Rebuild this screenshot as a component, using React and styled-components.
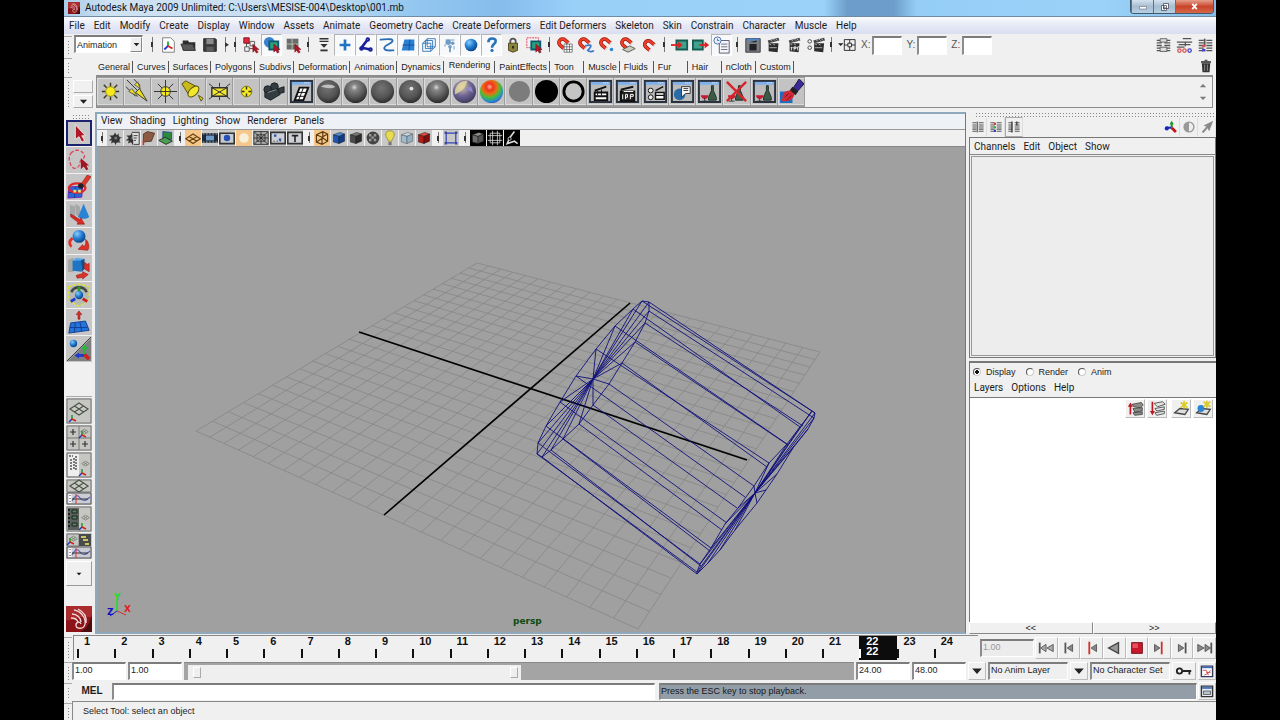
import React from 'react';
import styled, { createGlobalStyle, css } from 'styled-components';

const UI_FONT = 'Roboto, "Open Sans", sans-serif';
const SMALL_FONT = '"Liberation Sans", Arial, sans-serif';

const MENUS = [
	'File', 'Edit', 'Modify', 'Create', 'Display', 'Window', 'Assets', 'Animate',
	'Geometry Cache', 'Create Deformers', 'Edit Deformers', 'Skeleton', 'Skin',
	'Constrain', 'Character', 'Muscle', 'Help',
];

const SHELF_TABS = [
	'General', 'Curves', 'Surfaces', 'Polygons', 'Subdivs', 'Deformation',
	'Animation', 'Dynamics', 'Rendering', 'PaintEffects', 'Toon', 'Muscle',
	'Fluids', 'Fur', 'Hair', 'nCloth', 'Custom',
];

// '|' is a separator, '>' a collapsed group, a leading '+' a pressed button
const STATUS_ITEMS = [
	'newScene', 'openScene', 'saveScene', '>', '|',
	'selHierarchy', '+selObject', 'selComponent', '|', 'maskMenu',
	'+maskPoint', '+maskJoint', '+maskCurve', '+maskSurface', '+maskDeform',
	'+maskDynamic', '+maskRender', '+maskMisc', 'lock', 'highlight', '|',
	'magnetGrid', 'magnetCurve', 'magnetPoint', 'magnetPlane', 'magnetLive', '|',
	'inputs', 'outputs', '+history', '|',
	'renderView', 'clapper', 'clapperIpr', 'clapperSettings', '|', 'inputMode',
];

const SHELF_ITEMS = [
	'ambient', 'directional', 'pointLight', 'spot', 'areaLight', 'volume',
	'camera', 'hypershade', 'anisotropic', 'blinn', 'lambert', 'phong', 'phongE',
	'layered', 'ramp', 'surfaceShader', 'useBackground', 'shadingMap',
	'winRender', 'winIpr', 'winSettings', 'winSphere', 'winFlask', 'noFlask',
	'winFlask', 'brush',
];

const VIEW_ITEMS = [
	'|', 'camSelect', 'camAttr', 'bookmark', 'imagePlane', '|',
	'+gridToggle', 'filmGate', 'resGate', '+gateMask', 'fieldChart', 'safeAction',
	'safeTitle', '|', '+wireBox', 'blueBox', 'darkBox', 'checker', 'bulb',
	'softBox', 'redBox', '|', 'isolate', '|', 'xray', 'xrayFrame', 'xrayJoint',
];

const TOOLS = [
	'toolSelect', 'toolLasso', 'toolPaint', 'toolMove', 'toolRotate',
	'toolScale', 'toolUniversal', 'toolSoft', 'toolManip',
];

const LAYOUTS = [
	'laySingle', 'layFour', 'layOutliner', 'layGraph', 'layHyper', 'layMixed',
];

const PLAYBACK = [
	'toStart', 'prevFrame', 'prevKey', 'playBack', 'stop', 'nextKey',
	'nextFrame', 'toEnd',
];

const clap = (
	<g>
		<path d="M4 8h11l-1 10-10-1z" fill="#2c2c2c" />
		<path d="M3 5l12-3 1 3L4 8z" fill="#444" />
		<path d="M6 4l2 2M9 3l2 2M12 3l2 2M5 9l2 1M9 9l2 1M5 13h8" stroke="#bbb" />
	</g>
);

const magnet = (
	<g fill="none" transform="rotate(-50 8 8)">
		<path d="M4 13V7a4 4 0 0 1 8 0v6" stroke="#9c1208" strokeWidth="4" />
		<path d="M4 13V7a4 4 0 0 1 8 0v6" stroke="#f0402c" strokeWidth="2.500" />
		<path d="M2 13h4M10 13h4" stroke="#e4e4e4" strokeWidth="2" />
	</g>
);

const cursor = <path d="M12 9v9l2-2 2 3 2-1-2-3h3z" fill="#b01828" stroke="#6b0d16" strokeWidth=".5" />;

const windowFrame = (
	<g>
		<path d="M2 2h22v22H2z" fill="#bcbcbc" stroke="#2c3340" strokeWidth="2" />
		<path d="M3 3h20v3H3z" fill="#7fb0ea" />
		<path d="M16 4h6" stroke="#fff" strokeDasharray="1 1" />
	</g>
);

const rays = (
	<path
		d="M13 4v4M13 18v4M4 13h4M18 13h4M6 6l3 3M17 17l3 3M20 6l-3 3M9 17l-3 3"
		stroke="#3a3a20"
		strokeWidth="1.500"
	/>
);

const flask = (
	<g>
		<path d="M15 7h2v5l3 7v3h-8v-3l3-7z" fill="#3c5c48" stroke="#1c3024" />
		<path d="M4 17h8c0 5-8 5-8 0z" fill="#c51a30" />
		<path d="M8 20v3M5 23h6" stroke="#333" />
	</g>
);

const plane = (
	<path
		d="M4 11l9-6 9 6-9 6zM8.500 8l9 6M17.500 8l-9 6"
		fill="#c9ccc4"
		stroke="#4c5448"
		strokeWidth="1.200"
	/>
);

const axes = (x, y) => (
	<g strokeWidth="1.500" fill="none">
		<path d={`M${x} ${y}v-4`} stroke="#1d9a2e" />
		<path d={`M${x} ${y}l-3 3`} stroke="#1c35c8" />
		<path d={`M${x} ${y}l4 2`} stroke="#d32020" />
	</g>
);

const ball = (id) => <circle cx="13" cy="13" r="12" fill={`url(#${id})`} />;

const wave = (
	<g fill="none">
		<path d="M1 14h24v11H1z" fill="#c9ccd2" stroke="#555" />
		<path d="M4 15v9" stroke="#fff" strokeWidth="3" />
		<path d="M4 16v8" stroke="#333" strokeDasharray="1 2" />
		<path d="M6 22c4-7 6-6 8-3s5 4 10-1" stroke="#5862b8" strokeWidth="1.200" />
		<path d="M6 20h16" stroke="#333" />
		<path d="M10 15v10" stroke="#d33" />
	</g>
);

const box = (top, left, right) => (
	<g stroke="#1a1a1a" strokeWidth=".6">
		<path d="M3 6l8-3 6 2-7 3z" fill={top} />
		<path d="M3 6l7 2v9l-7-2z" fill={left} />
		<path d="M10 8l7-3v9l-7 3z" fill={right} />
	</g>
);

const reel = (
	<g fill="#333">
		<circle cx="11" cy="11" r="5" />
		<path d="M10 3l2 4 3-3-1 5h5l-5 3 3 4-5-1-1 4-2-4-4 2 1-4-4 0 4-3-3-3 5 0z" />
		<circle cx="11" cy="10" r="2" fill="#777" />
	</g>
);

const lines = (
	<path d="M2 4h6M2 7h6M2 10h6M2 13h6M2 16h6M11 4h7M11 7h7M11 10h7M11 13h7M11 16h7" stroke="#555" strokeWidth="1.500" />
);

// each entry: [viewBox size, drawing]
const ICONS = {
	newScene: [20, <g><path d="M4 2h9l4 4v12H4z" fill="#fff" stroke="#777" /><path d="M10 11V6" stroke="#1faf3a" strokeWidth="2" /><path d="M10 11l-4 4" stroke="#1c35d8" strokeWidth="2" /><path d="M10 11l5 3" stroke="#e02020" strokeWidth="2" /></g>],
	openScene: [20, <g><path d="M3 5h6l1 2h7v9H3z" fill="#2e2e2e" /><path d="M1 9h13l3 7H4z" fill="#5a5a5a" stroke="#333" /></g>],
	saveScene: [20, <g><path d="M3 3h13l1 1v13H3z" fill="#3b3b3b" stroke="#222" /><path d="M6 3h8v6H6z" fill="#8b8b8b" /><path d="M6 12h8v5H6z" fill="#5e5e5e" /></g>],
	selHierarchy: [20, <g><path d="M5 6v8h8M5 8h6" fill="none" stroke="#444" /><path d="M2 2h6v6H2z" fill="#e0283a" stroke="#7a1020" /><path d="M9 6h5v5H9zM3 12h5v5H3z" fill="#eee" stroke="#555" />{cursor}</g>],
	selObject: [20, <g><circle cx="7" cy="7" r="6" fill="#3a7fd0" /><path d="M7 6h10v9H7z" fill="#2ba078" stroke="#0d5a70" strokeWidth="2" />{cursor}</g>],
	selComponent: [20, <g><path d="M3 3h13v12H3z" fill="#6c6c6c" /><path d="M9 3v12M3 9h13" stroke="#b8c8b0" />{cursor}</g>],
	maskMenu: [20, <g><path d="M5 3h10M5 6h10" stroke="#333" strokeWidth="1.500" /><path d="M6 9h8l-4 4z" fill="#333" /><path d="M6 16h8" stroke="#333" strokeWidth="2" /></g>],
	maskPoint: [20, <path d="M10 4v12M4 10h12" stroke="#2272c4" strokeWidth="3" />],
	maskJoint: [20, <g fill="none" stroke="#1b2098" strokeWidth="3"><circle cx="12" cy="4" r="1" /><path d="M11 5l-6 8 10 2" /><circle cx="5" cy="14" r="1" /><circle cx="15" cy="15" r="1" /></g>],
	maskCurve: [20, <path d="M2 4c5 0 16-2 14 2-1 3-10 4-9 8 1 3 6 2 11 2" fill="none" stroke="#2b6cb4" strokeWidth="2" />],
	maskSurface: [20, <g><path d="M6 4l11 0v12l-14 0z" fill="#2a80d2" /><path d="M12 4l-1 12M4 10h13" stroke="#164c92" /></g>],
	maskDeform: [20, <path d="M3 8h9v9H3zM8 3h9v9H8zM3 8l5-5M12 17l5-5M6 5h8v9H6z" fill="none" stroke="#2f75b5" />],
	maskDynamic: [20, <g fill="#6f9cc4"><circle cx="8" cy="7" r="3" /><circle cx="13" cy="8" r="2" /><circle cx="10" cy="12" r="2" /><path d="M5 4h10v1H5zM9 12h2v6H9zM14 11h1v4h-1zM4 9h1v3H4z" /></g>],
	maskRender: [20, <circle cx="10" cy="10" r="7" fill="url(#gBlue)" />],
	maskMisc: [20, <g><path d="M6 7c0-6 9-5 8-1 0 3-4 3-4 7" fill="none" stroke="#2a72b8" strokeWidth="3" /><circle cx="10" cy="16" r="1.800" fill="#2a72b8" /></g>],
	lock: [20, <g><path d="M7 9V6a3 3 0 0 1 6 0v3" fill="none" stroke="#555" strokeWidth="2" /><path d="M5 8h10v8l-5 2-5-2z" fill="#8b8340" stroke="#4c4716" /><path d="M10 11v3" stroke="#222" strokeWidth="2" /></g>],
	highlight: [20, <g><path d="M2 2h13v11H2z" fill="none" stroke="#e03048" strokeDasharray="2 1" /><path d="M7 6h10v9H7z" fill="#2ba078" stroke="#0d5a70" strokeWidth="2" />{cursor}</g>],
	magnetGrid: [20, <g>{magnet}<path d="M9 9h9v9H9zM12 9v9M15 9v9M9 12h9M9 15h9" fill="#fff" stroke="#555" strokeWidth=".8" /></g>],
	magnetCurve: [20, <g>{magnet}<path d="M9 11c10-3 6 2 3 5 3 3 5 0 7 1" fill="none" stroke="#3f78c8" strokeWidth="2" /></g>],
	magnetPoint: [20, <g>{magnet}<circle cx="15" cy="15" r="2" fill="#2d8ad0" /></g>],
	magnetPlane: [20, <g>{magnet}<path d="M4 15l8-4 6 3-8 4z" fill="#c9cdbb" stroke="#555" /></g>],
	magnetLive: [20, <g transform="translate(2 2)">{magnet}</g>],
	inputs: [20, <g><path d="M6 5h12v10H6z" fill="#43a28d" stroke="#155c52" strokeWidth="2" /><path d="M0 10h9" stroke="#e02020" strokeWidth="2" /><path d="M8 6l5 4-5 4z" fill="#e02020" /></g>],
	outputs: [20, <g><path d="M1 5h11v10H1z" fill="#43a28d" stroke="#155c52" strokeWidth="2" /><path d="M8 10h7" stroke="#e02020" strokeWidth="2" /><path d="M14 6l5 4-5 4z" fill="#e02020" /></g>],
	history: [20, <g><path d="M7 5h11v14H7z" fill="#f4f4fa" stroke="#556" /><path d="M9 9h7M9 12h7M9 15h7" stroke="#667" /><circle cx="5" cy="5" r="4" fill="#e8f0ff" stroke="#3d68a8" /><path d="M5 3v2h2" fill="none" stroke="#3d68a8" /></g>],
	renderView: [20, <g><path d="M2 3h16v15H2z" fill="#7b8088" stroke="#333" /><path d="M3 3h14v2H3z" fill="#4b86d0" /><path d="M6 9h8v7H6zM6 7l8-2v2z" fill="#222" /></g>],
	clapper: [20, clap],
	clapperIpr: [20, <g>{clap}<path d="M6 12v4M9 16v-4h2v2H9M13 12v4M13 12h2" stroke="#eee" fill="none" /></g>],
	clapperSettings: [20, <g><g transform="translate(4 0)">{clap}</g><circle cx="3" cy="6" r="2" fill="none" stroke="#444" /><circle cx="3" cy="13" r="2" fill="none" stroke="#444" /></g>],
	inputMode: [20, <g><path d="M0 8h6l-3 3z" fill="#222" /><path d="M7 4h12v12H7z" fill="#eee" stroke="#222" /><path d="M13 4v12M7 10h12" stroke="#222" /><path d="M11 8h4v4h-4z" fill="#eee" stroke="#222" /></g>],

	ambient: [26, <g>{rays}<circle cx="13" cy="13" r="5" fill="#f7ea1c" stroke="#98901a" /></g>],
	directional: [26, <g stroke="#333" fill="#eee31c"><path d="M2 1l13 13M9 0l7 7M1 8l10 10" /><path d="M11 14l4-4 8 13z" /><path d="M10 6l3-3 3 7zM4 13l3-3 6 8z" strokeWidth=".7" /></g>],
	pointLight: [26, <g><path d="M13 1v24M1 13h24M5 5l16 16M21 5L5 21" stroke="#333" /><circle cx="13" cy="13" r="5" fill="#f7ea1c" stroke="#333" /><path d="M13 8v10M8 13h10" stroke="#333" /></g>],
	spot: [26, <g stroke="#55500c"><path d="M2 5l4-3 13 7c1 5-4 9-9 9z" fill="#c9ba18" /><ellipse cx="14" cy="13" rx="4" ry="7" transform="rotate(45 14 13)" fill="#f3e72c" /><path d="M19 17l5 3-2 3z" fill="#e6da20" /></g>],
	areaLight: [26, <g stroke="#333"><path d="M2 5l4 3M24 5l-4 3M2 21l4-3M24 21l-4-3M13 4v4M13 18v4" /><path d="M5 9h16v9H5z" fill="#f3e72c" strokeWidth="1.500" /><path d="M5 9l16 9M21 9L5 18" /></g>],
	volume: [26, <g><circle cx="13" cy="13" r="5.500" fill="#f7ea1c" stroke="#77700c" /><path d="M13 8v3M13 15v3M8 13h3M15 13h3" stroke="#333" strokeWidth="1.500" /></g>],
	camera: [26, <g fill="#333c40" stroke="#1c2224"><circle cx="7" cy="11" r="4" /><circle cx="14" cy="8" r="4" /><path d="M4 14l13-4 3 6-10 6-6-3z" /><path d="M18 10l6-2v6l-5 1z" /><path d="M7 14l9-3" stroke="#8a9498" /></g>],
	hypershade: [26, <g>{windowFrame}<path d="M11 9h9l-5 13H6z" fill="#fff" stroke="#111" strokeWidth="2" /><path d="M15 9l-5 13M9 14h9M7 18h9" stroke="#111" /></g>],
	anisotropic: [26, <g>{ball('gDark')}<path d="M5 8c4-3 11-3 15 0-4 3-10 1-15 0z" fill="#e4e4e4" opacity=".7" /></g>],
	blinn: [26, ball('gSoft')],
	lambert: [26, ball('gDark')],
	phong: [26, <g>{ball('gDark')}<circle cx="14" cy="10" r="2" fill="#fff" opacity=".8" /></g>],
	phongE: [26, ball('gSoft')],
	layered: [26, <g>{ball('gLayer')}<path d="M3 12C5 5 11 1 16 2c-2 7-6 11-13 14z" fill="#e6dca0" opacity=".8" /><path d="M13 10l7-2 2 6z" fill="#8f88c8" /></g>],
	ramp: [26, ball('gRamp')],
	surfaceShader: [26, <circle cx="13" cy="13" r="11" fill="#7c7c7c" />],
	useBackground: [26, <circle cx="13" cy="13" r="12" fill="#000" />],
	shadingMap: [26, <circle cx="13" cy="13" r="10" fill="#c4c4c4" stroke="#000" strokeWidth="3" />],
	winRender: [26, <g>{windowFrame}<path d="M7 14h13v8H7zM7 12l12-4M7 18h13" fill="#fff" stroke="#111" strokeWidth="2" /><path d="M10 12v5M14 11v6" stroke="#111" /></g>],
	winIpr: [26, <g>{windowFrame}<path d="M6 13h14v10H6zM6 11l13-3" fill="#222" stroke="#111" strokeWidth="2" /><path d="M8 16v5M11 21v-5h2v3h-2M16 21v-5h3v2h-3M9 13h10" fill="none" stroke="#fff" /></g>],
	winSettings: [26, <g>{windowFrame}<path d="M13 14h9v7h-9zM13 12l8-4M13 17h9" fill="#fff" stroke="#111" strokeWidth="1.500" /><circle cx="8" cy="12" r="2.500" fill="#eee" stroke="#111" /><circle cx="8" cy="19" r="2.500" fill="#eee" stroke="#111" /></g>],
	winSphere: [26, <g>{windowFrame}<circle cx="10" cy="16" r="6" fill="#2b6ca6" /><path d="M12 8h9v7h-5l-4 4z" fill="#fff" stroke="#333" /><path d="M14 10h5M14 12h5" stroke="#333" /></g>],
	winFlask: [26, <g>{windowFrame}{flask}</g>],
	noFlask: [26, <g>{flask}<path d="M3 3l20 20M23 3L3 23" stroke="#d8242c" strokeWidth="2.500" /></g>],
	brush: [26, <g><path d="M1 13h13v12H1z" fill="#1b70c0" /><path d="M21 0l-6 9 4 4 7-8z" fill="#3b2a98" stroke="#14103c" /><path d="M14 8l6 5-3 4-6-5z" fill="#222" /><path d="M4 16c1-3 5-4 8-4l4 4c-1 5-6 8-13 7z" fill="#d32a38" /><path d="M6 19l4-4M8 22l5-5" stroke="#701420" /></g>],

	camSelect: [20, reel],
	camAttr: [20, <g>{reel}<path d="M10 3h9v15h-7" fill="#ddd" stroke="#222" /><path d="M12 7h5M12 10h4M12 13h3" stroke="#222" /></g>],
	bookmark: [20, <g><path d="M3 5l5-3 9 2-4 10-10 1z" fill="#8c5a42" stroke="#52301e" /><path d="M3 13v6" stroke="#c32" strokeWidth="2" /></g>],
	imagePlane: [20, <g><path d="M6 2l11 1v9L6 11z" fill="#2c8a3a" stroke="#1c3c98" /><path d="M1 13l8-4 9 5-8 4z" fill="#4c9e50" stroke="#222" /></g>],
	gridToggle: [20, <path d="M1 11l9-6 9 6-9 6zM5 8l10 6M15 8L5 14" fill="none" stroke="#6b4310" strokeWidth="1.500" />],
	filmGate: [20, <g><path d="M0 4h20v12H0z" fill="#1f2a38" /><path d="M5 7h10v6H5z" fill="#6c9cc8" /><path d="M1 5h18M1 15h18" stroke="#ccc" strokeDasharray="2 2" /></g>],
	resGate: [20, <g><path d="M1 4h18v13H1z" fill="#c6cbd2" stroke="#333" strokeWidth="2" /><circle cx="10" cy="10" r="4" fill="#2450b8" /></g>],
	gateMask: [20, <circle cx="10" cy="10" r="6" fill="#f8efd8" />],
	fieldChart: [20, <path d="M1 2h18v16H1zM1 2l18 16M19 2L1 18M5 6h10v8H5zM10 2v16M1 10h18" fill="#aaa" stroke="#222" />],
	safeAction: [20, <g><path d="M1 3h18v14H1z" fill="#cdd1d6" stroke="#333" strokeWidth="2" /><path d="M5 7h3M11 12h3" stroke="#2450b8" strokeWidth="3" /><path d="M4 14h12" stroke="#444" strokeDasharray="2 2" /></g>],
	safeTitle: [20, <g><path d="M1 3h18v14H1z" fill="#cdd1d6" stroke="#333" strokeWidth="2" /><path d="M6 7h8M10 7v8" stroke="#222" strokeWidth="2" /></g>],
	wireBox: [20, <path d="M3 6l8-4 6 3v9l-7 4-7-3zM3 6l7 3 7-4M10 9v9M11 2v8l-8 5M11 10l6 4" fill="none" stroke="#5c3a0c" strokeWidth="1.500" />],
	blueBox: [20, box('#4f8cdc', '#1c56b0', '#123c88')],
	darkBox: [20, box('#777', '#4a4a4a', '#2c2c2c')],
	checker: [20, <g><circle cx="10" cy="10" r="8" fill="#444" /><path d="M5 5h3v3H5zM11 5h3v3h-3zM8 8h3v3H8zM5 11h3v3H5zM11 11h3v3h-3z" fill="#999" /></g>],
	bulb: [20, <g><path d="M10 1c-7 0-6 7-3 10l1 3h4l1-3c3-3 4-10-3-10z" fill="#e8dd50" stroke="#90862c" /><path d="M8 15h4v4H8z" fill="#777" /></g>],
	softBox: [20, <g opacity=".7">{box('#c4dcea', '#8fb8d0', '#7aa6c4')}</g>],
	redBox: [20, box('#e44a3c', '#b41c18', '#7c100e')],
	isolate: [20, <g><path d="M4 4h12v12H4z" fill="none" stroke="#3140b8" strokeWidth="1.500" /><path d="M2 2h3v3H2zM15 2h3v3h-3zM2 15h3v3H2zM15 15h3v3h-3z" fill="#404894" /></g>],
	xray: [20, <g><path d="M0 0h20v20H0z" /><g opacity=".7">{box('#ccc', '#999', '#777')}</g></g>],
	xrayFrame: [20, <g><path d="M0 0h20v20H0z" /><path d="M4 4h12v12H4zM1 7h18M1 13h18M7 1v18M13 1v18" fill="none" stroke="#ddd" /></g>],
	xrayJoint: [20, <g><path d="M0 0h20v20H0z" /><path d="M13 2L7 10l-3 7 9-3 4 3" fill="none" stroke="#ddd" strokeWidth="2" /><circle cx="7" cy="11" r="2" fill="#000" stroke="#ddd" /></g>],

	toolSelect: [26, <path d="M9 4v16l4-3 3 6 3-2-3-5h4z" fill="#b01828" stroke="#f4e4e4" />],
	toolLasso: [26, <g><path d="M4 6c5-6 14-4 15 3 0 3-5 3-5 7 0 6-8 9-10 2-1-4-3-7 0-12z" fill="none" stroke="#dc4c5c" strokeWidth="1.500" strokeDasharray="4 2" /><path d="M15 11v12l3-3 3 4 2-1-2-4h3z" fill="#a01424" /></g>],
	toolPaint: [26, <g><path d="M2 13l15-1-1 12-15 1z" fill="#2668d8" stroke="#7a1cb0" /><path d="M2 19h14M9 13l-1 12" stroke="#12389c" /><ellipse cx="11" cy="14" rx="9" ry="5" fill="none" stroke="#e02828" strokeWidth="2.500" /><path d="M15 10l7-10 4 2-8 11z" fill="#e03828" stroke="#801410" strokeWidth=".6" /><circle cx="15" cy="12" r="3" fill="#222" /><path d="M7 16h3v3H7zM12 16h3v3h-3z" fill="#f0e070" /></g>],
	toolMove: [26, <g><path d="M3 3l6 2v13l-6-3zM9 2l5 3v12l-4-3z" fill="#a4a8a8" /><path d="M18 2l6 14c-2 3-9 3-12 0z" fill="#2a84d4" /><path d="M4 13l10 6 1-2 4 7-8 0 1-2L4 16z" fill="#d82c28" stroke="#8c1210" strokeWidth=".6" /></g>],
	toolRotate: [26, <g><circle cx="13" cy="8" r="7" fill="url(#gBlue)" /><path d="M6 10c-4 3-4 7-1 9" fill="none" stroke="#e03028" strokeWidth="3" /><path d="M20 11c5 4 4 12 2 12l-10-1 5-5 1 2c2-1 3-3 2-8z" fill="#e03028" stroke="#8c1210" strokeWidth=".6" /></g>],
	toolScale: [26, <g><path d="M1 4l6-2v16l-6-1z" fill="#a4a8a8" /><path d="M6 5l9-1 1 13-10-1z" fill="#2074c4" /><path d="M6 5l4-3 9 1-4 2z" fill="#5aaaf0" /><path d="M15 5l4-2v11l-3 3z" fill="#14508c" /><path d="M19 7l3 2 2-1v9l-5-3zM10 21l7-2v-2l6 3-6 5v-2l-6 1z" fill="#e03028" stroke="#8c1210" strokeWidth=".6" /></g>],
	toolUniversal: [26, <g><path d="M2 4l11-3 11 3v15l-11 6-11-6z" fill="#b4bab4" stroke="#e4e428" strokeWidth="1.500" strokeDasharray="3 2" /><path d="M5 10c1-7 15-7 16 0" fill="none" stroke="#444" strokeWidth="3" /><circle cx="13" cy="13" r="4.500" fill="url(#gBlue)" /><path d="M13 9V4" stroke="#2a9a30" strokeWidth="3" /><path d="M9 17l-5 3" stroke="#2038d0" strokeWidth="3" /><path d="M17 17l5 3" stroke="#d02020" strokeWidth="3" /></g>],
	toolSoft: [26, <g><path d="M4 14l16-2 4 10-22 3z" fill="#2474dc" stroke="#103c90" /><path d="M9 14l-1 10M14 13l2 10M3 19h19" stroke="#103c90" /><path d="M13 1l3 4h-2v5h-2V5h-2z" fill="#d82c28" stroke="#8c1210" strokeWidth=".6" /></g>],
	toolManip: [26, <g><path d="M26 1v25H1z" fill="#7c8080" /><path d="M26 0L0 26" stroke="#333" /><circle cx="7" cy="7" r="4" fill="url(#gBlue)" /><path d="M19 20V12" stroke="#22b838" strokeWidth="3" /><path d="M19 20h-8" stroke="#2038d0" strokeWidth="3" /><path d="M19 19l5 5" stroke="#d02020" strokeWidth="4" /><path d="M15 13l4-5 4 5z" fill="#22b838" /><path d="M13 17l-5 3 5 3z" fill="#2038d0" /></g>],

	laySingle: [26, <g><path d="M1 1h24v24H1z" fill="#c6c6c2" stroke="#777" />{plane}{axes(6, 21)}</g>],
	layFour: [26, <g><path d="M1 1h24v24H1zM13 1v24M1 13h24" fill="#c6c6c2" stroke="#777" /><path d="M7 4v6M4 7h6M7 16v6M4 19h6M19 16v6M16 19h6" stroke="#333" strokeWidth="1.200" /><g transform="translate(13 2) scale(.42)">{plane}</g>{axes(16, 10)}</g>],
	layOutliner: [26, <g><path d="M1 1h24v24H1z" fill="#c6c6c2" stroke="#777" /><path d="M2 2h11v22H2z" fill="#eee" /><path d="M3 4h4M5 7v12M8 6v11M10 4v14" stroke="#555" strokeWidth="1.500" strokeDasharray="2 1" /><g transform="translate(14 7) scale(.42)">{plane}</g>{axes(16, 21)}</g>],
	layGraph: [26, <g><path d="M1 1h24v12H1z" fill="#c6c6c2" stroke="#777" /><g transform="translate(0 -4)">{plane}</g>{wave}</g>],
	layHyper: [26, <g><path d="M1 1h24v24H1z" fill="#c6c6c2" stroke="#777" /><path d="M2 2h11v22H2z" fill="#5a605c" /><path d="M3 3v20" stroke="#222" strokeDasharray="2 2" strokeWidth="2" /><path d="M6 4h5v3H6zM6 10h5v3H6zM6 17h5v3H6z" fill="#4c8858" stroke="#222" /><g transform="translate(14 7) scale(.42)">{plane}</g>{axes(16, 21)}</g>],
	layMixed: [26, <g><path d="M1 1h12v12H1z" fill="#c6c6c2" stroke="#777" /><path d="M13 1h12v12H13z" fill="#484c4a" /><g transform="translate(2 1) scale(.42)">{plane}</g><path d="M15 4h5M17 7h5M19 11h4" stroke="#d0c460" strokeWidth="2" />{axes(4, 9)}{wave}</g>],
	mayaLogo: [26, <g><path d="M0 0h26v26H0z" fill="#8c1418" /><path d="M0 0h26v12C14 8 8 16 0 14z" fill="#c03c3c" opacity=".6" /><path d="M26 8v18H14c8-4 10-10 12-18z" fill="#300808" opacity=".7" /><path d="M8 4c7 1 12 8 11 14-1 6-9 5-9 1 0-3 4-4 5-1M6 8c5 0 9 4 9 8M5 12c4 0 6 1 7 4M12 3c6 3 9 8 8 14" fill="none" stroke="#f0d8d8" strokeWidth="1.300" /></g>],

	sideAttr: [20, <g>{lines}<path d="M9 2v16" stroke="#555" strokeWidth="1.500" /></g>],
	sideTool: [20, <g>{lines}<path d="M7 4h3v3H7z" fill="#c33" /><path d="M7 9h3v3H7z" fill="#3a3" /><path d="M7 14h3v3H7z" fill="#33c" /></g>],
	sideBoth: [20, <g>{lines}<path d="M7 2v16M14 2v6" stroke="#444" strokeWidth="2" /></g>],
	uiOne: [20, <g>{lines}<path d="M6 2h8v4H6zM6 12h8v5H6z" fill="#ddd" stroke="#555" /></g>],
	uiTwo: [20, <g><path d="M1 6h18M3 9h14M1 12h9M8 2h10M11 6v5" stroke="#555" strokeWidth="1.500" /><g fill="none" strokeWidth="1.500"><circle cx="4" cy="16" r="2" stroke="#d55" /><circle cx="10" cy="16" r="2" stroke="#d55" /><circle cx="16" cy="16" r="2" stroke="#44c" /></g></g>],
	uiThree: [20, <g>{lines}<path d="M9 2v9" stroke="#555" strokeWidth="2" /><path d="M6 9h4v3H6z" fill="#c55" /><path d="M6 14h4v3H6z" fill="#44c" /></g>],
	trash: [20, <g><path d="M4 6h12l-1 13H5z" fill="#333" /><path d="M3 3h14v3H3zM8 1h4v2H8z" fill="#555" /><path d="M8 8v9M12 8v9" stroke="#aaa" /></g>],
	manipAxes: [20, <g><path d="M11 10V4" stroke="#1a9a28" strokeWidth="3" /><path d="M8 6l3-5 3 5z" fill="#1a9a28" /><path d="M11 11H4" stroke="#1828b8" strokeWidth="3" /><circle cx="4" cy="12" r="3" fill="#1828b8" /><path d="M11 11l6 6" stroke="#c01818" strokeWidth="4" /></g>],
	halfMoon: [20, <g><circle cx="10" cy="10" r="8" fill="#999" /><path d="M10 4a6 6 0 0 1 0 12z" fill="#eee" /></g>],
	diagArrow: [20, <path d="M3 17l7-8-4-1 12-6-5 13-2-4-6 7z" fill="#888" stroke="#888" />],
	layerUp: [20, <g><path d="M6 5l11-2 2 3-3 3-8-1zM7 10l11-1v4l-9 1zM7 15l11-1v3l-9 1z" fill="#8b8f88" stroke="#444" /><path d="M4 17V7" stroke="#c01820" strokeWidth="2" /><path d="M1 8l3-5 3 5z" fill="#c01820" /></g>],
	layerDown: [20, <g><path d="M6 4l10-2 3 3-9 3zM7 10l11-2v3l-9 2zM7 15l11-2v3l-9 2z" fill="#e4e4e4" stroke="#444" /><path d="M4 2v12" stroke="#c01820" strokeWidth="2" /><path d="M1 13l3 5 3-5z" fill="#c01820" /></g>],
	layerNew: [20, <g><path d="M2 15l6-5 10 1-4 6z" fill="#ddd" stroke="#444" strokeWidth="1.500" /><path d="M13 1v9M9 3l8 6M17 3l-8 6" stroke="#d8cc28" strokeWidth="2" /></g>],
	layerAssign: [20, <g><path d="M2 15l6-5 10 1-4 6z" fill="#ddd" stroke="#444" strokeWidth="1.500" /><circle cx="7" cy="10" r="4" fill="#2a84d4" /><path d="M14 1v8M10 2l8 6M18 2l-8 6" stroke="#d8cc28" strokeWidth="2" /></g>],

	toStart: [20, <g fill="#555"><path d="M2 4h2v12H2z" /><path d="M10 6v8l-6-4zM18 6v8l-7-4z" fill="#aaa" stroke="#555" /></g>],
	prevFrame: [20, <g fill="#555"><path d="M5 4h2v12H5z" /><path d="M14 6v8l-6-4z" fill="#888" stroke="#555" /></g>],
	prevKey: [20, <g><path d="M6 3h2v14H6z" fill="#d03028" /><path d="M15 6v8l-6-4z" fill="#888" stroke="#555" /></g>],
	playBack: [20, <path d="M15 4v12L4 10z" fill="#999" stroke="#444" strokeWidth="1.500" />],
	stop: [20, <g><path d="M4 4h12v12H4z" fill="#c8182c" stroke="#701018" /><path d="M5 5h6v5H5z" fill="#e85060" /></g>],
	nextKey: [20, <g><path d="M12 3h2v14h-2z" fill="#d03028" /><path d="M5 6v8l6-4z" fill="#888" stroke="#555" /></g>],
	nextFrame: [20, <g fill="#555"><path d="M13 4h2v12h-2z" /><path d="M6 6v8l6-4z" fill="#888" stroke="#555" /></g>],
	toEnd: [20, <g fill="#555"><path d="M16 4h2v12h-2z" /><path d="M2 6v8l7-4zM10 6v8l6-4z" fill="#888" stroke="#555" /></g>],
	key: [20, <g fill="none" stroke="#222" strokeWidth="2"><circle cx="5" cy="10" r="3" /><path d="M8 10h10M16 10v4" /></g>],
	prefs: [20, <g><path d="M2 3h16v15H2z" fill="#fff" stroke="#333a60" strokeWidth="2" /><path d="M3 4h14v2H3z" fill="#3c68c0" /><path d="M4 9h5l3 7M15 9l-3 4-6 3M9 12h6" stroke="#d04850" strokeWidth="1.300" fill="none" /></g>],
	script: [20, <g><path d="M2 3h16v15H2z" fill="#e8ecf2" stroke="#333" strokeWidth="2" /><path d="M3 4h14v3H3z" fill="#4c7ab8" /><path d="M5 10h10v5H5z" fill="#b8c4d0" stroke="#444" /></g>],
	down: [20, <path d="M2 6h16l-8 9z" fill="#222" />],
	smallDown: [20, <path d="M6 8h8l-4 4z" fill="#111" />],
	scroller: [20, <g fill="#777"><path d="M6 4h8l-4-4zM6 16h8l-4 4z" /></g>],
	minimize: [20, <path d="M3 9h14v5H3z" fill="#fff" stroke="#556" />],
	restore: [20, <path d="M7 3h10v10H7zM3 7h10v10H3zM7 10h3v4H7z" fill="#fff" stroke="#445" strokeWidth="1.500" />],
	close: [20, <path d="M5 4l10 12M15 4L5 16" stroke="#fff" strokeWidth="4" />],
};

const Icon = ({ name, size }) => {
	const [box, drawing] = ICONS[name];
	return (
		<svg width={size} height={size} viewBox={`0 0 ${box} ${box}`} aria-hidden="true">
			{drawing}
		</svg>
	);
};

const Gradients = () => (
	<HiddenDefs aria-hidden="true">
		<defs>
			<radialGradient id="gBlue" cx=".35" cy=".3" r=".75">
				<stop offset="0" stopColor="#8ccbf8" />
				<stop offset=".5" stopColor="#2380d4" />
				<stop offset="1" stopColor="#0b3f80" />
			</radialGradient>
			<radialGradient id="gDark" cx=".45" cy=".35" r=".7">
				<stop offset="0" stopColor="#747474" />
				<stop offset=".6" stopColor="#545454" />
				<stop offset="1" stopColor="#262626" />
			</radialGradient>
			<radialGradient id="gSoft" cx=".45" cy=".32" r=".7">
				<stop offset="0" stopColor="#d8d8d8" />
				<stop offset=".2" stopColor="#868686" />
				<stop offset=".6" stopColor="#5a5a5a" />
				<stop offset="1" stopColor="#262626" />
			</radialGradient>
			<radialGradient id="gLayer" cx=".4" cy=".3" r=".8">
				<stop offset="0" stopColor="#d8c8a8" />
				<stop offset=".5" stopColor="#6c6494" />
				<stop offset="1" stopColor="#34304c" />
			</radialGradient>
			<radialGradient id="gRamp" cx=".42" cy=".3" r=".75">
				<stop offset="0" stopColor="#f8b0a0" />
				<stop offset=".2" stopColor="#f03418" />
				<stop offset=".42" stopColor="#e87018" />
				<stop offset=".6" stopColor="#48c030" />
				<stop offset=".85" stopColor="#2888d0" />
				<stop offset="1" stopColor="#3040b0" />
			</radialGradient>
		</defs>
	</HiddenDefs>
);

// ground plane corners: left, top, right, bottom
const GROUND = [[196, 431], [477, 263], [820, 352], [638, 629]];
const CELLS = 24;

const project = (u, v) => {
	const [[x0, y0], [x1, y1], [x2, y2], [x3, y3]] = GROUND;
	const dx1 = x1 - x2, dx2 = x3 - x2, dx3 = x0 - x1 + x2 - x3;
	const dy1 = y1 - y2, dy2 = y3 - y2, dy3 = y0 - y1 + y2 - y3;
	const den = dx1 * dy2 - dx2 * dy1;
	const g = (dx3 * dy2 - dx2 * dy3) / den;
	const h = (dx1 * dy3 - dx3 * dy1) / den;
	const w = g * u + h * v + 1;
	return [
		((x1 - x0 + g * x1) * u + (x3 - x0 + h * x3) * v + x0) / w,
		((y1 - y0 + g * y1) * u + (y3 - y0 + h * y3) * v + y0) / w,
	];
};

const segment = (a, b) => `M${a[0].toFixed(1)} ${a[1].toFixed(1)}L${b[0].toFixed(1)} ${b[1].toFixed(1)}`;

const FRONT = [
	[642, 301], [649, 302], [649, 311], [645, 323], [635, 342], [622, 363],
	[609, 384], [593, 405], [579, 424], [563, 439], [551, 450], [542, 457],
	[537, 454], [538, 443], [546, 426], [560, 402], [576, 376], [596, 349],
	[615, 326], [633, 309],
];
const BACK = [
	[812, 411], [815, 413], [814, 418], [808, 429], [793, 448], [777, 474],
	[766, 490], [757, 503], [735, 530], [720, 550], [708, 563], [697, 574],
	[697, 572], [700, 564], [711, 548], [725, 524], [738, 508], [754, 486],
	[769, 463], [787, 444], [800, 427],
];
const SIDE_ENDS = [
	[812, 411], [815, 413], [814, 418], [803, 426], [788, 445], [767, 467],
	[754, 486], [737, 508], [722, 530], [710, 551], [701, 566], [697, 574],
	[697, 572], [700, 564], [711, 548], [727, 523], [745, 497], [769, 463],
	[787, 444], [800, 427],
];

const fan = (ring, hub) => ring.map(p => segment(p, hub)).join('');

const Scene = () => {
	const grid = [];
	for (let i = 0; i <= CELLS; i++) {
		const t = i / CELLS;
		grid.push(segment(project(t, 0), project(t, 1)));
		grid.push(segment(project(0, t), project(1, t)));
	}
	return (
		<SceneSvg viewBox="97 147 868 485" preserveAspectRatio="xMidYMid slice" role="img" aria-label="persp view">
			<path d={grid.join('')} stroke="#868686" strokeWidth=".8" fill="none" />
			<path d="M359 332L747 460M630 303L384 515" stroke="#000" strokeWidth="1.600" />
			<g fill="none" stroke="#10107c" strokeWidth=".9">
				<polygon points={FRONT.join(' ')} />
				<polygon points={BACK.join(' ')} />
				<path d={fan(FRONT, [593, 379]) + fan(BACK, [755, 493])} />
				<path d={FRONT.map((p, i) => segment(p, SIDE_ENDS[i])).join('')} />
			</g>
			<path d="M117 611v-12" stroke="#22dd22" strokeWidth="1.500" />
			<path d="M117 611l9 4" stroke="#d03030" />
			<path d="M117 611l-7 5" stroke="#2020c0" />
			<AxisText x="114" y="600" fill="#22dd22">Y</AxisText>
			<AxisText x="107" y="615" fill="#1010c8">Z</AxisText>
			<AxisText x="124" y="612" fill="#e02020">X</AxisText>
			<AxisText x="513" y="624" fill="#0c4c14">persp</AxisText>
		</SceneSvg>
	);
};

const Toolbar = ({ items, size, Button }) => items.map((item, i) => {
	if (item === '|') return <Separator key={i} />;
	if (item === '>') return <Separator key={i} $collapsed />;
	const pressed = item[0] === '+';
	const name = pressed ? item.slice(1) : item;
	return (
		<Button key={i} $pressed={pressed} aria-label={name}>
			<Icon name={name} size={size} />
		</Button>
	);
});

const Menu = ({ items, gap }) => (
	<MenuList $gap={gap}>
		{items.map(label => <MenuButton key={label}>{label}</MenuButton>)}
	</MenuList>
);

const App = () => {
	const frames = Array.from({ length: 24 }, (_, i) => i + 1);

	return (
		<Desktop>
			<GlobalStyle />
			<Gradients />
			<Window>
				<TitleBar>
					<Icon name="mayaLogo" size={12} />
					<Title>Autodesk Maya 2009 Unlimited: C:\Users\MESISE-004\Desktop\001.mb</Title>
					<WindowButtons>
						<WindowButton aria-label="Minimize"><Icon name="minimize" size={10} /></WindowButton>
						<WindowButton aria-label="Restore"><Icon name="restore" size={10} /></WindowButton>
						<WindowButton $close aria-label="Close"><Icon name="close" size={9} /></WindowButton>
					</WindowButtons>
				</TitleBar>
				<MenuBar><Menu items={MENUS} gap={9} /></MenuBar>

				<StatusLine>
					<Grip />
					<SelectBox>
						<Select aria-label="Menu set" defaultValue="Animation">
							<option>Animation</option>
							<option>Rendering</option>
						</Select>
						<SelectArrow><Icon name="down" size={7} /></SelectArrow>
					</SelectBox>
					<Separator />
					<Toolbar items={STATUS_ITEMS} size={18} Button={StatusButton} />
					{['X', 'Y', 'Z'].map(axis => (
						<Coord key={axis}>{axis}:<CoordInput /></Coord>
					))}
					<Spacer />
					<Toolbar items={['uiOne', 'uiTwo', 'uiThree']} size={17} Button={StatusButton} />
				</StatusLine>

				<ShelfTabs>
					<Grip />
					<TabList>
						{SHELF_TABS.map(tab => (
							<Tab key={tab} $active={tab === 'Rendering'}>{tab}</Tab>
						))}
					</TabList>
					<StatusButton aria-label="Delete shelf item"><Icon name="trash" size={14} /></StatusButton>
				</ShelfTabs>

				<ShelfRow>
					<Grip />
					<ShelfSwitch>
						<SwitchButton aria-label="Shelf tabs" />
						<SwitchButton aria-label="Shelf menu"><Icon name="down" size={9} /></SwitchButton>
					</ShelfSwitch>
					<Shelf>
						<ShelfGrid>
							{SHELF_ITEMS.map((name, i) => (
								<ShelfButton key={i} aria-label={name}><Icon name={name} size={25} /></ShelfButton>
							))}
						</ShelfGrid>
						<ShelfEmpty><Icon name="scroller" size={16} /></ShelfEmpty>
					</Shelf>
				</ShelfRow>

				<Main>
					<ToolBox>
						<HGrip />
						{TOOLS.map((name, i) => (
							<ToolButton key={name} $selected={i === 0} aria-label={name}><Icon name={name} size={24} /></ToolButton>
						))}
						<ToolGap />
						{LAYOUTS.map(name => (
							<ToolButton key={name} aria-label={name}><Icon name={name} size={26} /></ToolButton>
						))}
						<LayoutMenu aria-label="More layouts"><Icon name="smallDown" size={12} /></LayoutMenu>
						<Spacer />
						<ToolButton aria-label="Maya"><Icon name="mayaLogo" size={26} /></ToolButton>
					</ToolBox>

					<ViewPanel>
						<PanelMenu><Menu items={['View', 'Shading', 'Lighting', 'Show', 'Renderer', 'Panels']} gap={7} /></PanelMenu>
						<ViewTools><Toolbar items={VIEW_ITEMS} size={16} Button={ViewButton} /></ViewTools>
						<Viewport><Scene /></Viewport>
					</ViewPanel>

					<Sidebar>
						<HGrip />
						<SideIcons>
							<Toolbar items={['sideAttr', 'sideTool', '+sideBoth']} size={14} Button={SideButton} />
							<Spacer />
							<Toolbar items={['manipAxes', 'halfMoon', 'diagArrow']} size={14} Button={SideButton} />
						</SideIcons>
						<ChannelBox>
							<ChannelMenu><Menu items={['Channels', 'Edit', 'Object', 'Show']} gap={8} /></ChannelMenu>
							<ChannelList />
						</ChannelBox>
						<LayerBox>
							<RadioRow>
								{['Display', 'Render', 'Anim'].map(label => (
									<RadioLabel key={label}>
										<Radio type="radio" name="layers" defaultChecked={label === 'Display'} />
										{label}
									</RadioLabel>
								))}
							</RadioRow>
							<LayerMenu><Menu items={['Layers', 'Options', 'Help']} gap={8} /></LayerMenu>
							<LayerList>
								<Toolbar items={['layerUp', 'layerDown', 'layerNew', 'layerAssign']} size={17} Button={LayerButton} />
							</LayerList>
						</LayerBox>
						<SideFooter>
							<FooterButton>&lt;&lt;</FooterButton>
							<FooterButton>&gt;&gt;</FooterButton>
						</SideFooter>
					</Sidebar>
				</Main>

				<TimeRow>
					<Grip />
					<Timeline>
						{frames.map(n => (
							<Frame key={n} $current={n === 22}>
								<span>{n}</span>
								{n === 22 && <span>{n}</span>}
							</Frame>
						))}
					</Timeline>
					<Playback>
						<TimeField aria-label="Current time" defaultValue="1.00" $dim />
						<PlayButtons><Toolbar items={PLAYBACK} size={18} Button={PlayButton} /></PlayButtons>
					</Playback>
				</TimeRow>

				<RangeRow>
					<Grip />
					<RangeFields>
						<TimeField aria-label="Animation start" defaultValue="1.00" />
						<TimeField aria-label="Playback start" defaultValue="1.00" />
						<RangeTrack>
							<RangeBar>
								<RangeHandle aria-label="Range start" />
								<RangeHandle aria-label="Range end" />
							</RangeBar>
						</RangeTrack>
						<TimeField aria-label="Playback end" defaultValue="24.00" />
						<TimeField aria-label="Animation end" defaultValue="48.00" />
						<RangeButton aria-label="Anim layer menu"><Icon name="down" size={12} /></RangeButton>
						<LayerField aria-label="Anim layer" defaultValue="No Anim Layer" />
						<RangeButton aria-label="Character set menu"><Icon name="down" size={12} /></RangeButton>
						<LayerField aria-label="Character set" defaultValue="No Character Set" />
						<RangeButton $wide aria-label="Auto keyframe"><Icon name="key" size={18} /></RangeButton>
						<RangeButton aria-label="Preferences"><Icon name="prefs" size={14} /></RangeButton>
					</RangeFields>
				</RangeRow>

				<CommandRow>
					<Grip />
					<CommandLabel htmlFor="mel">MEL</CommandLabel>
					<CommandInput id="mel" />
					<CommandResult>Press the ESC key to stop playback.</CommandResult>
					<RangeButton aria-label="Script editor"><Icon name="script" size={14} /></RangeButton>
				</CommandRow>

				<HelpRow>
					<Grip />
					<HelpLine>Select Tool: select an object</HelpLine>
				</HelpRow>
			</Window>
		</Desktop>
	);
};

const GlobalStyle = createGlobalStyle`
	* {
		box-sizing: border-box;
	}

	body {
		margin: 0;
		background: #000;
	}

	button, input, select {
		margin: 0;
		padding: 0;
		border: 0;
		border-radius: 0;
		background: none;
		color: inherit;
		font: inherit;
	}

	svg {
		display: block;
		flex: none;
	}
`;

const sunken = css`
	border: 1px solid #fff;
	border-top: 2px solid #7c7c7c;
	border-left: 2px solid #8c8c8c;
`;

const center = css`
	display: flex;
	align-items: center;
	justify-content: center;
`;

const HiddenDefs = styled.svg`
	position: absolute;
	width: 0;
	height: 0;
`;

const Desktop = styled.div`
	display: flex;
	min-height: 100vh;
	padding: 0 5%;
	background: #000;
	color: #1c1c1c;
	font: 10px/12px ${UI_FONT};
`;

const Window = styled.div`
	display: flex;
	flex-direction: column;
	flex: 1;
	min-width: 0;
	background: #f0f0f0;
`;

const TitleBar = styled.header`
	display: flex;
	align-items: center;
	height: 17px;
	padding-left: 4px;
	gap: 5px;
	background: linear-gradient(90deg, #a8cbe8 0, #cfe2f2 4%, #c6def2 22%, #94c8f0 30%, #86bcec 38%, #98d0f8 44%, #9ad2f9 66%, #6d9dca 68%, #6d9dca 72%, #94cdf6 74%, #9ad2f9 90%, #86bde8 100%);
	border-bottom: 1px solid #6f8ba6;
`;

const Title = styled.h1`
	flex: 1;
	margin: 0;
	font: 10px/14px ${UI_FONT};
	color: #10161c;
`;

const WindowButtons = styled.div`
	display: flex;
	align-self: flex-start;
	height: 14px;
	margin-right: 2px;
	border: 1px solid #44586c;
	border-top: 0;
	border-radius: 0 0 4px 4px;
	overflow: hidden;
`;

const WindowButton = styled.button`
	${center}
	width: ${props => (props.$close ? 38 : 22)}px;
	border-left: 1px solid #5b7188;
	background: ${props => (props.$close
		? 'linear-gradient(#e6a08c, #c8452c 50%, #d86848)'
		: 'linear-gradient(#d4e2ee, #a6bdd2 50%, #b6d0e4)')};
`;

const MenuBar = styled.nav`
	height: 17px;
	padding: 3px 5px 0;
	background: linear-gradient(#fafbfe, #e6e9f5 50%, #d9def0);
`;

const MenuList = styled.div`
	display: flex;
	gap: ${props => props.$gap}px;
`;

const MenuButton = styled.button`
	white-space: nowrap;
	font: 10px/12px ${UI_FONT};
`;

const Grip = styled.div`
	flex: none;
	width: 8px;
	margin: 2px 0 1px;
	padding: 2px 2px 0 3px;
	border-top: 1px solid #aaa;
	background: radial-gradient(circle, #888 0, #888 1px, transparent 1px) 0 0 / 3px 3px;
	background-clip: content-box;
`;

const HGrip = styled.div`
	flex: none;
	height: 5px;
	margin: 0 1px 0 6px;
	background: radial-gradient(circle, #888 0, #888 1px, transparent 1px) 0 0 / 3px 3px;
`;

const Spacer = styled.div`
	flex: 1;
`;

const Separator = styled.div`
	position: relative;
	flex: none;
	width: 10px;
	background: linear-gradient(#777, #777) center / 1px 70% no-repeat;

	&::after {
		content: '';
		position: absolute;
		top: 38%;
		left: ${props => (props.$collapsed ? 5 : 4)}px;
		width: ${props => (props.$collapsed ? 4 : 2)}px;
		height: 5px;
		background: #333;
		clip-path: ${props => (props.$collapsed ? 'polygon(0 0, 100% 50%, 0 100%)' : 'none')};
	}
`;

const StatusLine = styled.div`
	display: flex;
	align-items: stretch;
	height: 22px;

	& > ${Grip} {
		margin-right: 2px;
	}
`;

const StatusButton = styled.button`
	${center}
	flex: none;
	width: 21px;
	${props => props.$pressed && css`
		border: 1px solid #fff;
		border-top-color: #b4b4b4;
		border-left-color: #b4b4b4;
		background: #f8f9fb;
	`}
`;

const SelectBox = styled.div`
	position: relative;
	width: 69px;
	height: 18px;
	margin: 1px 4px 0 0;
	align-self: flex-start;
	${sunken}
	background: #fff;
`;

const Select = styled.select`
	width: 100%;
	height: 100%;
	padding-left: 1px;
	appearance: none;
	font: 9px/12px ${SMALL_FONT};
`;

const SelectArrow = styled.span`
	${center}
	position: absolute;
	top: 0;
	right: 0;
	bottom: 0;
	width: 12px;
	border: 1px solid #888;
	border-top-color: #fff;
	border-left-color: #fff;
	background: #eee;
	pointer-events: none;
`;

const Coord = styled.label`
	display: flex;
	align-items: center;
	gap: 2px;
	margin-left: 4px;
	font: 10px/12px ${SMALL_FONT};
	color: #555;
`;

const CoordInput = styled.input`
	width: 30px;
	height: 19px;
	${sunken}
	background: #fff;
`;

const ShelfTabs = styled.div`
	display: flex;
	height: 19px;
`;

const TabList = styled.div`
	display: flex;
	flex: 1;
	padding-left: 22px;
`;

const Tab = styled.button`
	min-width: 34px;
	padding: ${props => (props.$active ? '0 5px 3px' : '2px 3px 0 4px')};
	text-align: left;
	white-space: nowrap;
	font: 9px/12px ${SMALL_FONT};
	border-top: 1px solid ${props => (props.$active ? '#fff' : 'transparent')};
	background: linear-gradient(#555, #555) right 4px / 1px 12px no-repeat;
`;

const ShelfRow = styled.div`
	display: flex;
	height: 33px;
	margin-bottom: 4px;
`;

const ShelfSwitch = styled.div`
	display: flex;
	flex-direction: column;
	gap: 2px;
	width: 20px;
	margin: 5px 3px 0 1px;
`;

const SwitchButton = styled.button`
	${center}
	flex: 1;
	border: 1px solid #aaa;
	border-top-color: #fff;
	border-left-color: #fff;
`;

const Shelf = styled.div`
	display: flex;
	flex: 1;
	margin-right: 3px;
	border: 1px solid #8c8c8c;
	border-top-width: 2px;
`;

const ShelfGrid = styled.div`
	display: grid;
	grid-template-columns: repeat(26, 1fr);
	width: 708px;
	padding: 1px 0 2px;
	background: #9c9c9c;
`;

const ShelfButton = styled.button`
	${center}
	margin-right: 1px;
	border: 1px solid #dcdcdc;
	border-right: 0;
	background: #c3c3c3;
`;

const ShelfEmpty = styled.div`
	display: flex;
	align-items: center;
	justify-content: flex-end;
	flex: 1;
	padding-right: 1px;
`;

const Main = styled.main`
	display: flex;
	flex: 1;
	min-height: 480px;
	padding-bottom: 1px;
`;

const ToolBox = styled.div`
	display: flex;
	flex-direction: column;
	flex: none;
	gap: 1px;
	width: 31px;
	padding: 2px 3px 2px 2px;
`;

const ToolButton = styled.button`
	${center}
	flex: none;
	width: 26px;
	height: 26px;
	background: #c6c6c6;
	${props => props.$selected && css`
		border: 2px solid #1d2270;
	`}
`;

const ToolGap = styled.div`
	height: 34px;
	border-bottom: 1px solid #aaa;
`;

const LayoutMenu = styled.button`
	${center}
	height: 25px;
	margin-top: 1px;
	border: 1px solid #999;
	border-top-color: #fff;
	border-left-color: #fff;
`;

const ViewPanel = styled.section`
	display: flex;
	flex-direction: column;
	flex: 1;
	min-width: 0;
	border: 2px solid #8fa8bc;
	border-right: 1px solid #777;
`;

const PanelMenu = styled.div`
	height: 16px;
	padding: 1px 4px 0;
	background: #eef2f7;
	border-bottom: 1px solid #999;
`;

const ViewTools = styled.div`
	display: flex;
	height: 17px;
	border-bottom: 1px solid #888;
`;

const ViewButton = styled.button`
	${center}
	flex: none;
	width: 16px;
	margin-right: 1px;
	background: ${props => (props.$pressed ? '#f6c78a' : '#c8c8c8')};
`;

const Viewport = styled.div`
	position: relative;
	flex: 1;
	min-height: 0;
	background: #a0a0a0;
`;

const SceneSvg = styled.svg`
	position: absolute;
	inset: 0;
	width: 100%;
	height: 100%;
`;

const AxisText = styled.text`
	font: bold 9px "DejaVu Sans", sans-serif;
`;

const Sidebar = styled.aside`
	display: flex;
	flex-direction: column;
	flex: none;
	width: 250px;
	padding-left: 3px;
`;

const SideIcons = styled.div`
	display: flex;
	height: 20px;
`;

const SideButton = styled.button`
	${center}
	width: 18px;
	border: 1px solid ${props => (props.$pressed ? '#aaa' : 'transparent')};
	border-right-color: #ddd;
`;

const ChannelBox = styled.div`
	display: flex;
	flex-direction: column;
	height: 221px;
	border: 1px solid #777;
`;

const ChannelMenu = styled.div`
	height: 17px;
	padding: 3px 4px 0;
	border-bottom: 1px solid #888;
`;

const ChannelList = styled.div`
	flex: 1;
	margin: 1px;
	border: 1px solid #999;
	background: #ededed;
`;

const LayerBox = styled.div`
	display: flex;
	flex-direction: column;
	flex: 1;
	margin-top: 3px;
	border: 1px solid #777;
	border-width: 2px 0 0 1px;
`;

const RadioRow = styled.div`
	display: flex;
	gap: 10px;
	height: 18px;
	padding: 0 3px;
`;

const RadioLabel = styled.label`
	display: flex;
	align-items: center;
	gap: 5px;
	font: 9px/12px ${SMALL_FONT};
`;

const Radio = styled.input`
	width: 8px;
	height: 8px;
	appearance: none;
	border: 1px solid #ccc;
	border-top-color: #555;
	border-left-color: #555;
	border-radius: 50%;
	background: #fff;

	&:checked {
		background: radial-gradient(circle, #111 0, #111 2px, #fff 2px);
	}
`;

const LayerMenu = styled.div`
	height: 16px;
	padding: 1px 4px 0;
`;

const LayerList = styled.div`
	display: flex;
	justify-content: flex-end;
	align-items: flex-start;
	flex: 1;
	gap: 2px;
	padding: 1px 3px 0 0;
	border-top: 1px solid #777;
	background: #fff;
`;

const LayerButton = styled.button`
	${center}
	width: 20px;
	height: 19px;
	border: 1px solid #bbb;
	border-top-color: #fff;
	border-left-color: #fff;
	background: #f0f0f0;

	&:nth-child(3) {
		margin-left: 2px;
	}
`;

const SideFooter = styled.div`
	display: flex;
	height: 12px;
`;

const FooterButton = styled.button`
	flex: 1;
	font: 9px/9px ${SMALL_FONT};
	border: 1px solid #888;
	border-top-color: #fff;
	border-left-color: #fff;
`;

const TimeRow = styled.div`
	display: flex;
	height: 25px;
`;

const Timeline = styled.div`
	display: grid;
	grid-template-columns: repeat(24, 1fr);
	flex: 1;
	margin-left: 1px;
	padding: 0 7px 0 3px;
	border-top: 1px solid #888;
	border-left: 1px solid #888;
`;

const Frame = styled.div`
	display: flex;
	flex-direction: column;
	padding-left: 7px;
	font: bold 11px/10px ${SMALL_FONT};
	color: ${props => (props.$current ? '#fff' : '#111')};
	background:
		linear-gradient(${props => (props.$current ? '#fff, #fff' : '#111, #111')}) 0 13px / 2px 9px no-repeat
		${props => (props.$current ? '#0c0c0c' : 'transparent')};
`;

const Playback = styled.div`
	display: flex;
	align-items: center;
	width: 238px;
	gap: 1px;
	padding-left: 2px;
`;

const PlayButtons = styled.div`
	display: grid;
	grid-template-columns: repeat(8, 1fr);
	flex: 1;
	height: 22px;
`;

const PlayButton = styled.button`
	${center}
	border: 1px solid #bbb;
	border-top-color: #fff;
	border-left-color: #fff;
`;

const TimeField = styled.input`
	flex: none;
	width: 54px;
	height: 18px;
	padding: 0 1px 3px;
	${sunken}
	background: ${props => (props.$dim ? '#ececec' : '#fff')};
	color: ${props => (props.$dim ? '#999' : '#1c1c1c')};
	font: 9px/12px ${SMALL_FONT};
`;

const RangeRow = styled.div`
	display: flex;
	height: 21px;
`;

const RangeFields = styled.div`
	display: flex;
	align-items: center;
	flex: 1;
	gap: 2px;
`;

const RangeTrack = styled.div`
	flex: 1;
	height: 18px;
	padding: 2px 0 0 4px;
	background: #a4a4a4;
	border-top: 1px solid #888;
`;

const RangeBar = styled.div`
	display: flex;
	justify-content: space-between;
	align-items: center;
	width: 50%;
	height: 100%;
	padding: 0 3px 0 5px;
	background: #efefef;
`;

const RangeHandle = styled.button`
	width: 8px;
	height: 11px;
	border: 1px solid #aaa;
	border-top-color: #fff;
	border-left-color: #fff;
`;

const RangeButton = styled.button`
	${center}
	flex: none;
	width: ${props => (props.$wide ? 24 : 18)}px;
	height: 18px;
	border: 1px solid #bbb;
	border-top-color: #fff;
	border-left-color: #fff;
`;

const LayerField = styled(TimeField)`
	width: 80px;
	background: #efefef;
`;

const CommandRow = styled.div`
	display: flex;
	align-items: center;
	height: 20px;

	& > ${Grip} {
		align-self: stretch;
	}
`;

const CommandLabel = styled.label`
	width: 40px;
	text-align: center;
	font: bold 10px/12px ${SMALL_FONT};
`;

const CommandInput = styled.input`
	flex: 1 1 8px;
	min-width: 0;
	height: 17px;
	${sunken}
	background: #fff;
`;

const CommandResult = styled.output`
	flex: 1;
	height: 17px;
	margin: 0 1px 0 4px;
	${sunken}
	background: #929da7;
	color: #14181c;
	font: 9px/13px ${SMALL_FONT};
`;

const HelpRow = styled.footer`
	display: flex;
	height: 19px;
`;

const HelpLine = styled.div`
	flex: 1;
	padding: 3px 10px 0;
	border-top: 1px solid #888;
	border-left: 1px solid #888;
	font: 9px/12px ${SMALL_FONT};
`;

export default App;
